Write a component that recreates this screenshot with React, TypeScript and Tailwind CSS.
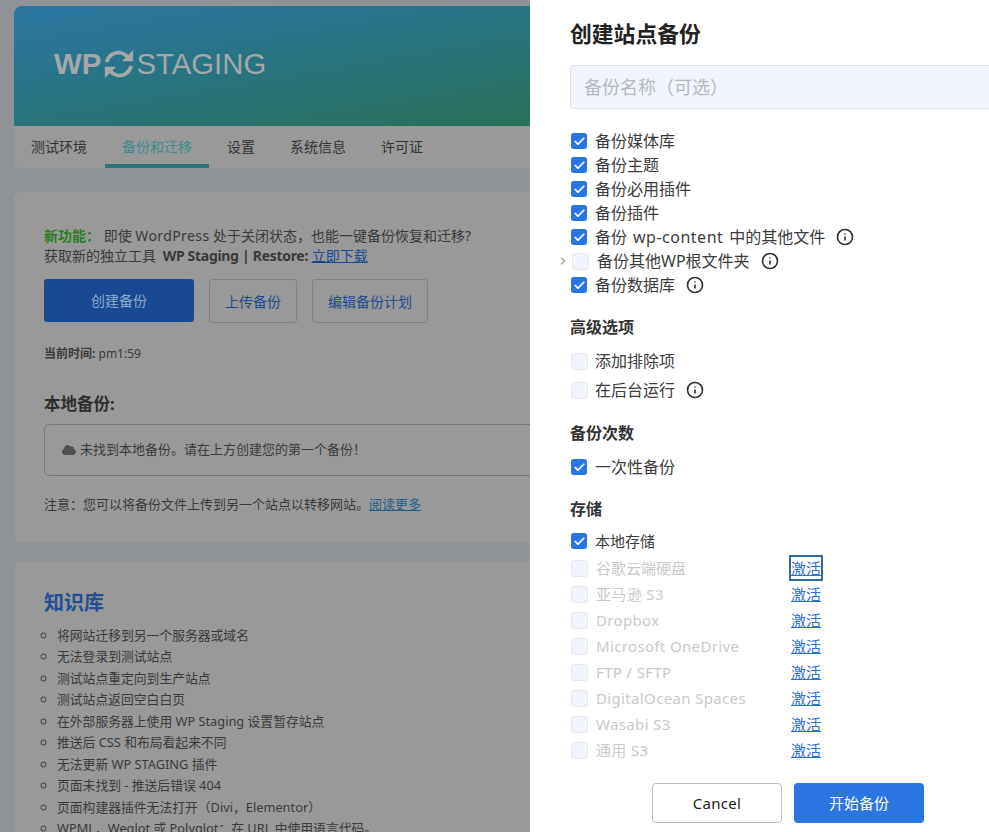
import React from 'react';
import { Check, ChevronRight, Info } from 'lucide-react';
import { FaCloud } from 'react-icons/fa';

const tabs = ['测试环境', '备份和迁移', '设置', '系统信息', '许可证'];

const articles = [
  '将网站迁移到另一个服务器或域名',
  '无法登录到测试站点',
  '测试站点重定向到生产站点',
  '测试站点返回空白白页',
  '在外部服务器上使用 WP Staging 设置暂存站点',
  '推送后 CSS 和布局看起来不同',
  '无法更新 WP STAGING 插件',
  '页面未找到 - 推送后错误 404',
  '页面构建器插件无法打开（Divi，Elementor）',
  'WPML，Weglot 或 Polyglot：在 URL 中使用语言代码。',
];

const storages = ['谷歌云端硬盘', '亚马逊 S3', 'Dropbox', 'Microsoft OneDrive', 'FTP / SFTP', 'DigitalOcean Spaces', 'Wasabi S3', '通用 S3'];

const Box: React.FC<{ checked?: boolean }> = ({ checked }) =>
  checked ? (
    <span className="flex h-4 w-4 shrink-0 items-center justify-center rounded-[3px] bg-[#2a75e6]">
      <Check size={13} strokeWidth={3.2} className="text-white" />
    </span>
  ) : (
    <span className="h-[17px] w-[17px] shrink-0 rounded-[3px] border border-[#e6e8ee] bg-[#f1f4fc]" />
  );

const Row: React.FC<{ label: React.ReactNode; checked?: boolean; info?: boolean; className?: string }> = ({ label, checked, info, className = 'h-6' }) => (
  <div className={`flex items-center ${className}`}>
    <span className="flex w-[25px] shrink-0 pl-px"><Box checked={checked} /></span>
    <span className="text-[16px] text-[#3c3c3c]">{label}</span>
    {info && <Info size={18} strokeWidth={2.2} className="ml-[11px] text-[#333]" />}
  </div>
);

const App: React.FC = () => {
  return (
    <div className="flex h-[832px] w-[989px] overflow-hidden font-['Noto_Sans','Noto_Sans_CJK_SC',sans-serif]">
      <div className="h-full w-[530px] shrink-0 overflow-hidden bg-[#909396] pl-[14px] pt-[6px] text-[#3a3a3a]">
        <div className="w-[700px] overflow-hidden rounded-lg bg-[#999]">
          <div className="flex h-[120px] items-center bg-gradient-to-br from-[#2a76a2] to-[#2a6f4c] pl-10 pb-[5px]">
            <span className="font-['Liberation_Sans',sans-serif] text-[29.5px] font-bold leading-none text-[#a5a7a8]">WP</span>
            <svg width="32" height="32" viewBox="0 0 32 34" className="ml-[1px] mr-[2px]" fill="none" stroke="#a5a7a8" strokeWidth="4">
              <path d="M3 15 C5 7 12 4 18 5 C22 6 24 8 26 10" />
              <path d="M31 2 L31 14 L19 14 Z" fill="#a5a7a8" stroke="none" />
              <path d="M29 19 C27 27 20 30 14 29 C10 28 8 26 6 24" />
              <path d="M1 32 L1 20 L13 20 Z" fill="#a5a7a8" stroke="none" />
            </svg>
            <span className="font-['Liberation_Sans',sans-serif] text-[29.3px] leading-none text-[#a5a7a8]">STAGING</span>
          </div>
          <div className="flex h-[42px] gap-px">
            {tabs.map((t, i) => (
              <div
                key={t}
                className={`flex items-center px-[17px] text-[14px] ${i === 1 ? 'border-b-4 border-[#2b7379] pt-[2px] text-[#3f8a90]' : 'pb-[2px] text-[#333]'}`}
              >
                {t}
              </div>
            ))}
          </div>
        </div>

        <div className="mt-6 h-[350px] w-[700px] rounded-lg bg-[#999] pl-[30px] pt-[34px]">
          <p className="text-[14px] leading-5">
            <span className="font-bold text-[#2c7c22]">新功能：</span> 即使 <span className="tracking-[0.4px]">WordPress</span> 处于关闭状态，也能一键备份恢复和迁移?
          </p>
          <p className="text-[14px] leading-5">
            获取新的独立工具 <b className="ml-[3px] tracking-[-0.3px]">WP Staging | Restore:</b> <a className="text-[#17498f] underline">立即下载</a>
          </p>
          <div className="mt-[13px] flex items-start gap-[15px] text-[14px] text-[#1c4b8c]">
            <button className="h-[43px] w-[150px] rounded-[3px] bg-[#174a93] text-[#8fa9cf]">创建备份</button>
            <button className="h-[44px] w-[88px] rounded-[3px] border border-[#7f8285]">上传备份</button>
            <button className="h-[44px] w-[116px] rounded-[3px] border border-[#7f8285]">编辑备份计划</button>
          </div>
          <p className="mt-[23px] text-[12px] leading-4"><b>当前时间:</b> pm1:59</p>
          <h3 className="mt-[30px] text-[16.5px] font-bold leading-6 text-[#2e2e2e]">本地备份:</h3>
          <div className="mt-2 flex h-[52px] w-[600px] items-center rounded-[5px] border border-[#77797b] pl-[17px] text-[13px]">
            <FaCloud size={14} className="mr-[4px] text-[#4f5052]" />
            未找到本地备份。请在上方创建您的第一个备份！
          </div>
          <p className="mt-[18px] text-[13px] leading-5">
            注意：您可以将备份文件上传到另一个站点以转移网站。<a className="text-[#1f5c8a] underline">阅读更多</a>
          </p>
        </div>

        <div className="mt-5 w-[700px] rounded-lg bg-[#999] pl-[30px] pt-[27px]">
          <h2 className="text-[20px] font-bold leading-7 text-[#234f94]">知识库</h2>
          <ul className="mt-[8px] list-[circle] pl-[13px] text-[12.8px] leading-[21.45px]">
            {articles.map(a => <li key={a}>{a}</li>)}
          </ul>
        </div>
      </div>

      <div className="h-full flex-1 overflow-hidden bg-white pl-10 pt-[19px]">
        <h1 className="text-[21.8px] font-bold leading-[29px] text-[#222]">创建站点备份</h1>
        <div className="mt-[17px] flex h-[44px] w-[500px] items-center rounded-[3px] border border-[#dfe2ea] bg-[#f1f4fc] pl-[13px] text-[18px] text-[#b5b8bd]">
          备份名称（可选）
        </div>

        <div className="relative mt-[20px]">
          <Row label="备份媒体库" checked />
          <Row label="备份主题" checked />
          <Row label="备份必用插件" checked />
          <Row label="备份插件" checked />
          <Row label={<>备份<span className="mx-[6px] tracking-[0.5px]">wp-content</span>中的其他文件</>} checked info />
          <div className="flex h-6 items-center">
            <ChevronRight size={12} strokeWidth={2} className="absolute left-[-13px] text-[#555]" />
            <span className="flex w-[27px] shrink-0 pl-[2px]"><Box /></span>
            <span className="text-[16px] text-[#3c3c3c]">备份其他WP根文件夹</span>
            <Info size={18} strokeWidth={2.2} className="ml-[11px] text-[#333]" />
          </div>
          <Row label="备份数据库" checked info />
        </div>

        <h3 className="mt-[18px] text-[16px] font-bold leading-6 text-[#333]">高级选项</h3>
        <Row label="添加排除项" className="mt-[10px] h-6" />
        <Row label="在后台运行" info className="mt-[5px] h-6" />

        <h3 className="mt-[19px] text-[16px] font-bold leading-6 text-[#333]">备份次数</h3>
        <Row label="一次性备份" checked className="mt-[10px] h-6" />

        <h3 className="mt-[18px] text-[16px] font-bold leading-6 text-[#333]">存储</h3>
        <div className="mt-[6px] flex h-7 items-center text-[15px] text-[#3c3c3c]">
          <span className="flex w-[25px] shrink-0 pl-px"><Box checked /></span>
          本地存储
        </div>
        {storages.map((s, i) => (
          <div key={s} className="flex h-[26px] items-center text-[15px]">
            <span className="flex w-[26px] shrink-0 pl-px"><Box /></span>
            <span className={`w-[195px] shrink-0 text-[#c9c9c9] ${i === 0 ? '' : 'tracking-[0.35px]'}`}>{s}</span>
            <a className={`text-[#2a6fd6] underline ${i === 0 ? 'outline-2 outline-[#2f6b9f]' : ''}`}>激活</a>
          </div>
        ))}

        <div className="ml-[82px] mt-5 flex gap-3 text-[15px]">
          <button className="h-10 w-[130px] rounded border border-[#bbb] tracking-[0.3px] text-[#222]">Cancel</button>
          <button className="h-10 w-[130px] rounded bg-[#2a75e2] text-white">开始备份</button>
        </div>
      </div>
    </div>
  );
};

export default App;
